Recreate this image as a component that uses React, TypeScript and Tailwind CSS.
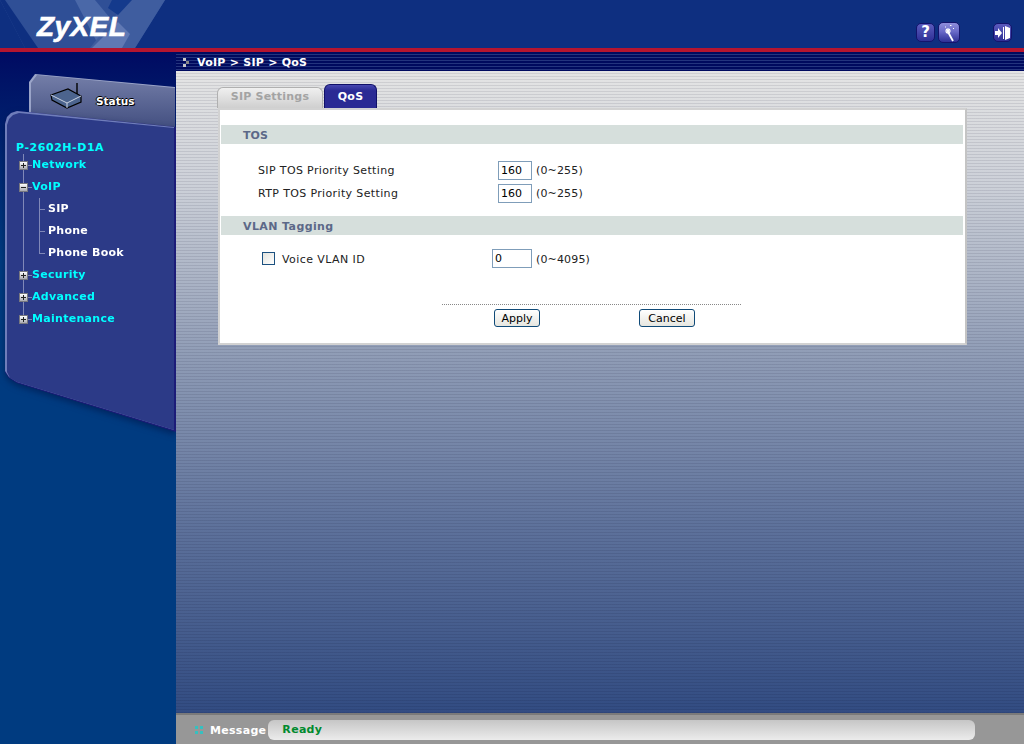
import React from 'react';

const dejavu = "font-['DejaVu_Sans',sans-serif]";

function ToolButton({ children, big }: { children: React.ReactNode; big?: boolean }) {
  return (
    <div className={`flex items-center justify-center rounded-[5px] border border-[#14146c] ${big ? 'h-[21px] w-[22px] bg-gradient-to-b from-[#8f8fdc] via-[#6a6ac8] via-[45%] to-[#2f2f96]' : 'h-[19px] w-[19px] bg-gradient-to-b from-[#5b5bbd] to-[#2f2f96]'}`}>
      {children}
    </div>
  );
}

function Header() {
  return (
    <header className="relative h-12 shrink-0 overflow-hidden bg-[#0e2f80]">
      <svg className="absolute left-0 top-0" width="170" height="48" viewBox="0 0 170 48">
        <polygon points="0,0 165,0 135,48 25,48" fill="#2f4f96" />
        <polygon points="0,0 5,0 38,48 25,48" fill="#0e2f80" />
        <polygon points="75,0 95,0 125,36 108,48 100,48" fill="#4a68a8" />
        <polygon points="128,0 165,0 135,48 90,48" fill="#3f5d9f" />
        <polygon points="112,0 132,0 118,15 108,8" fill="#143a8c" />
        <polygon points="118,22 130,34 122,48 92,48" fill="#6079b4" />
      </svg>
      <span className="absolute left-[37px] top-[12px] font-['Liberation_Sans',sans-serif] text-[28px] leading-[30px] font-bold italic tracking-[0.4px] text-white [-webkit-text-stroke:0.6px_white]">ZyXEL</span>
      <div className="absolute right-[12px] top-[23px] flex items-start">
        <ToolButton>
          <span className={`${dejavu} text-[15px] leading-none font-bold text-white`}>?</span>
        </ToolButton>
        <div className="-mt-px ml-[3px]">
          <ToolButton big>
            <svg width="18" height="18" viewBox="0 0 18 18" fill="none" stroke="#fff">
              <path d="M8 8l5 9" strokeWidth="1.8" />
              <path d="M5 7h6M8 4v6M6 5l4 4M10 5l-4 4" strokeWidth="1.1" />
              <path d="M10 1.5h1.5M5 3h1M13 4.5h1" strokeWidth="1" />
            </svg>
          </ToolButton>
        </div>
        <div className="ml-[33px]">
          <ToolButton>
            <svg width="17" height="16" viewBox="0 0 17 16" fill="#fff">
              <path d="M1 6h3V3l4 5-4 5v-3H1z" />
              <path d="M9 2h1v12H9z" />
              <path d="M11 1l5 2v10l-5 2z" />
            </svg>
          </ToolButton>
        </div>
      </div>
    </header>
  );
}

function Expander({ open }: { open?: boolean }) {
  return (
    <span className="relative z-10 flex h-[9px] w-[9px] shrink-0 items-center justify-center border border-[#77777f] bg-gradient-to-b from-[#ffffff] to-[#a9a9b0]">
      <span className="absolute h-px w-[5px] bg-[#222]" />
      {!open && <span className="absolute h-[5px] w-px bg-[#222]" />}
    </span>
  );
}

function TreeRow({ label, open }: { label: string; open?: boolean }) {
  return (
    <div className="flex h-[22px] items-center pl-[19px]">
      <Expander open={open} />
      <span className="h-px w-[4px] bg-[#8088b8]" />
      <span className={`${dejavu} text-[11px] font-bold tracking-[0.3px] text-[#00ffff]`}>{label}</span>
    </div>
  );
}

function SubRow({ label }: { label: string }) {
  return (
    <div className="flex h-[22px] items-center pl-[39px]">
      <span className="mr-[3px] h-px w-[6px] bg-[#8088b8]" />
      <span className={`${dejavu} text-[11px] font-bold tracking-[0.25px] text-white`}>{label}</span>
    </div>
  );
}

function Sidebar() {
  return (
    <aside className="relative w-[176px] shrink-0 overflow-hidden bg-gradient-to-b from-[#000a62] via-[#003b80] via-[30%] to-[#003b80]">
      {/* status tab */}
      <div className="absolute left-[29px] top-[22px] h-[60px] w-[146px] bg-[#9aa4c8] [clip-path:polygon(0_8px,6px_0,100%_13px,100%_100%,0_100%)]">
        <div className="absolute inset-0 left-[2px] top-px bg-gradient-to-b from-[#747ea8] to-[#3e4a7c] [clip-path:polygon(0_8px,6px_0,100%_13px,100%_100%,0_100%)]" />
        <svg className="absolute left-[20px] top-[9px]" width="34" height="28" viewBox="0 0 34 28">
          <path d="M2 12l17-6 13 7v6l-14 6-15-8z" fill="#4c648e" stroke="#000" strokeWidth="1.2" />
          <path d="M2 12l16 8 14-7M18 20v5" fill="none" stroke="#c8d0e0" strokeWidth="1" />
          <path d="M28 0v11" stroke="#000" strokeWidth="1.4" />
        </svg>
        <span className={`absolute left-[67px] top-[20px] ${dejavu} text-[10.5px] font-bold text-white [text-shadow:1px_1px_0_#000,-1px_0_0_#000,0_-1px_0_#000]`}>Status</span>
      </div>
      {/* model panel */}
      <div className="absolute left-[5px] top-[58px] h-[322px] w-[171px] [filter:drop-shadow(0_3px_3px_rgba(0,20,70,0.55))]">
        <div className="absolute inset-0 bg-[#1c1c78] [clip-path:polygon(0_14px,2px_7px,6px_3px,12px_1px,100%_17px,100%_100%,12px_273px,4px_268px,0_262px)]" />
        <div className="absolute inset-0 bottom-[2px] right-[2px] bg-[#6f7dba] [clip-path:polygon(0_14px,2px_7px,6px_3px,12px_1px,100%_17px,100%_100%,12px_272px,4px_267px,0_261px)]" />
        <div className="absolute inset-0 bottom-[2px] left-[2px] right-[2px] top-[2px] bg-[#2c3a87] [clip-path:polygon(0_13px,2px_7px,6px_3px,12px_1px,100%_16px,100%_100%,10px_270px,3px_266px,0_260px)]">
          <div className={`${dejavu} pl-[9px] pt-[29px] text-[11px] leading-[14px] font-bold tracking-[0.55px] text-[#00ffff]`}>P-2602H-D1A</div>
          <div className="relative -mt-px -ml-[7px]">
            <span className="absolute left-[23px] top-0 h-[165px] w-px bg-[#8088b8]" />
            <TreeRow label="Network" />
            <TreeRow label="VoIP" open />
            <div className="relative">
              <span className="absolute left-[39px] top-0 h-[56px] w-px bg-[#8088b8]" />
              <SubRow label="SIP" />
              <SubRow label="Phone" />
              <SubRow label="Phone Book" />
            </div>
            <TreeRow label="Security" />
            <TreeRow label="Advanced" />
            <TreeRow label="Maintenance" />
          </div>
        </div>
      </div>
    </aside>
  );
}

function Band({ label, tight }: { label: string; tight?: boolean }) {
  return (
    <div className={`flex h-[19px] items-center bg-[#d6dfdc] pl-[22px] pt-[3px] ${dejavu} text-[11px] font-bold text-[#5c6888] ${tight ? 'tracking-[0.4px]' : 'tracking-[0.1px]'}`}>
      {label}
    </div>
  );
}

function NumberBox({ value, wide }: { value: string; wide?: boolean }) {
  return (
    <div className={`flex h-[19px] items-center border border-[#7f9db9] bg-white ${wide ? 'w-[40px]' : 'w-[34px]'} pl-[2px] pt-[2px] ${dejavu} text-[11px] text-black`}>
      {value}
    </div>
  );
}

function SettingRow({ label, value, range }: { label: string; value: string; range: string }) {
  return (
    <div className="flex h-[23px] items-center pl-[37px]">
      <span className={`w-[240px] pt-[2px] ${dejavu} text-[11px] tracking-[0.36px] text-[#222]`}>{label}</span>
      <NumberBox value={value} />
      <span className={`ml-[4px] pt-[2px] ${dejavu} text-[11px] tracking-[0.15px] text-[#222]`}>{range}</span>
    </div>
  );
}

function PushButton({ label, width }: { label: string; width: string }) {
  return (
    <button className={`h-[18px] ${width} rounded-[3px] border border-[#0f4a78] bg-gradient-to-b from-white to-[#e6e6e0] ${dejavu} text-[11px] leading-none text-black`}>
      {label}
    </button>
  );
}

function QosPanel() {
  return (
    <div className="mt-[12px] ml-[42px] w-[749px]">
      <div className="flex h-[24px] items-end">
        <div className={`-ml-px flex h-[21px] w-[106px] items-center justify-center rounded-t-[6px] border border-b-0 border-[#b0b0b0] bg-gradient-to-b from-[#f0f0f0] to-[#cfcfcf] pb-[2px] ${dejavu} text-[11px] font-bold tracking-[0.22px] text-[#a3a3a3]`}>SIP Settings</div>
        <div className={`ml-px flex h-[24px] w-[53px] items-center justify-center rounded-t-[6px] border border-b-0 border-[#101068] bg-gradient-to-b from-[#4848b0] via-[#2a2a94] via-[25%] to-[#2a2a94] pt-[2px] ${dejavu} text-[11px] font-bold tracking-[0.3px] text-white`}>QoS</div>
      </div>
      <div className="h-[237px] border-2 border-[#d2d2d2] border-r-[#c4c4c4] bg-white pr-[2px] pl-px pt-[15px]">
        <Band label="TOS" />
        <div className="pt-[15px]">
          <SettingRow label="SIP TOS Priority Setting" value="160" range="(0~255)" />
          <SettingRow label="RTP TOS Priority Setting" value="160" range="(0~255)" />
        </div>
        <div className="mt-[11px]"><Band label="VLAN Tagging" tight /></div>
        <div className="box-content flex h-[24px] items-center pl-[41px] pt-[11px]">
          <span className="h-[13px] w-[13px] border border-[#1c5180] bg-gradient-to-br from-[#e4e4de] to-white" />
          <span className={`ml-[7px] w-[210px] pt-[4px] ${dejavu} text-[11px] tracking-[0.42px] text-[#222]`}>Voice VLAN ID</span>
          <NumberBox value="0" wide />
          <span className={`ml-[4px] pt-[4px] ${dejavu} text-[11px] tracking-[0.15px] text-[#222]`}>(0~4095)</span>
        </div>
        <div className="mt-[34px] ml-[221px] w-[299px] border-t border-dotted border-[#888]" />
        <div className="mt-[4px] ml-[273px] flex gap-[99px]">
          <PushButton label="Apply" width="w-[46px]" />
          <PushButton label="Cancel" width="w-[56px]" />
        </div>
      </div>
    </div>
  );
}

function StatusBar() {
  return (
    <div className="flex h-[31px] shrink-0 items-center border-t-2 border-[#7a7a7a] bg-[#979797] pl-[19px] pt-px">
      <span className="grid grid-cols-2 gap-[2px]">
        <i className="block h-[3px] w-[3px] bg-[#35c0c0]" />
        <i className="block h-[3px] w-[3px] bg-[#35c0c0]" />
        <i className="block h-[3px] w-[3px] bg-[#35c0c0]" />
        <i className="block h-[3px] w-[3px] bg-[#35c0c0]" />
      </span>
      <span className={`ml-[7px] pt-[2px] ${dejavu} text-[11px] font-bold tracking-[0.3px] text-white`}>Message</span>
      <div className={`ml-[2px] flex h-[20px] w-[707px] items-center rounded-[6px] bg-gradient-to-b from-[#c6c6c6] to-[#ececec] pl-[14px] pt-px ${dejavu} text-[11px] font-bold tracking-[0.3px] text-[#008a2e]`}>
        Ready
      </div>
    </div>
  );
}

export default function App() {
  return (
    <div className="flex h-[744px] w-[1024px] flex-col overflow-hidden bg-[#003b80]">
      <Header />
      <div className="h-1 shrink-0 bg-[#b5152f]" />
      <div className="flex min-h-0 flex-1">
        <Sidebar />
        <main className="flex min-w-0 flex-1 flex-col">
          <div className={`flex h-[19px] shrink-0 items-center bg-[repeating-linear-gradient(180deg,#000a5e_0px,#000a5e_2px,#24347e_2px,#24347e_3px)] pl-[7px] pt-[3px] ${dejavu} text-[11px] font-bold tracking-[0.25px] text-white`}>
            <span className="mr-[8px] -mt-[2px] grid grid-cols-2">
              <i className="block h-[3px] w-[3px] bg-[#c8c8c8]" />
              <i className="block h-[3px] w-[3px]" />
              <i className="block h-[3px] w-[3px]" />
              <i className="block h-[3px] w-[3px] bg-[#888]" />
              <i className="block h-[3px] w-[3px] bg-[#c8c8c8]" />
              <i className="block h-[3px] w-[3px]" />
            </span>
            VoIP &gt; SIP &gt; QoS
          </div>
          <div className="min-h-0 flex-1 bg-[repeating-linear-gradient(180deg,rgba(0,0,0,0)_0px,rgba(0,0,0,0)_2px,rgba(0,0,30,0.09)_2px,rgba(0,0,30,0.09)_3px),linear-gradient(180deg,#e4e4e4_0%,#ccd0d8_18%,#8e9bb5_45%,#5c709a_72%,#324c82_100%)] pt-px">
            <QosPanel />
          </div>
          <StatusBar />
        </main>
      </div>
    </div>
  );
}
